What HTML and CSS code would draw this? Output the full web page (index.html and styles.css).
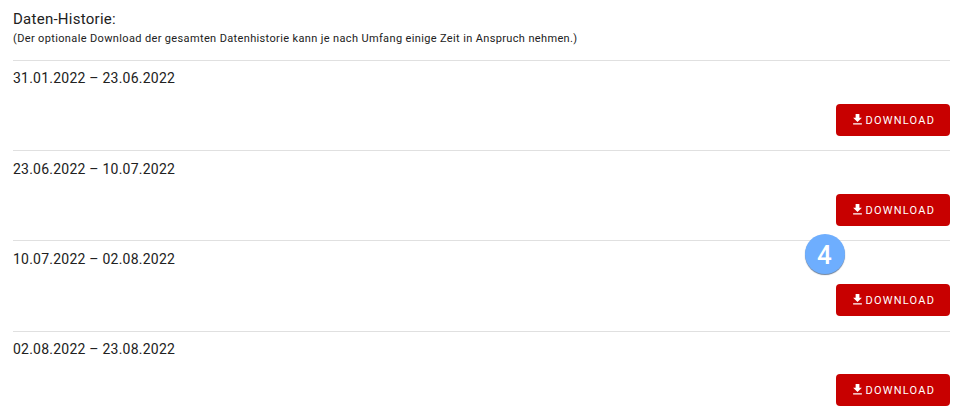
FILE: index.html
```html
<!DOCTYPE html>
<html lang="de">
<head>
<meta charset="utf-8">
<title>Daten-Historie</title>
<link rel="stylesheet" href="styles.css">
</head>
<body>
<svg class="defs" aria-hidden="true"><symbol id="dl" viewBox="0 0 24 24"><path d="M19 9h-4V3H9v6H5l7 7 7-7zM5 18v2h14v-2H5z"/></symbol></svg>
<main class="history">
  <header class="head">
    <h1 class="title">Daten-Historie:</h1>
    <p class="note">(Der optionale Download der gesamten Datenhistorie kann je nach Umfang einige Zeit in Anspruch nehmen.)</p>
  </header>
  <section class="row"><div class="range">31.01.2022 – 23.06.2022</div><button class="btn"><svg class="icon"><use href="#dl"/></svg><span class="label">DOWNLOAD</span></button></section>
  <section class="row"><div class="range">23.06.2022 – 10.07.2022</div><button class="btn"><svg class="icon"><use href="#dl"/></svg><span class="label">DOWNLOAD</span></button></section>
  <section class="row"><div class="range">10.07.2022 – 02.08.2022</div><button class="btn"><svg class="icon"><use href="#dl"/></svg><span class="label">DOWNLOAD</span></button><span class="badge">4</span></section>
  <section class="row"><div class="range">02.08.2022 – 23.08.2022</div><button class="btn"><svg class="icon"><use href="#dl"/></svg><span class="label">DOWNLOAD</span></button></section>
</main>
</body>
</html>
```
FILE: styles.css
```css
body {
  margin: 0;
  background: #fff;
  color: #212121;
  font-family: Roboto, sans-serif;
  overflow: hidden;
}
.defs { display: none; }
.history { padding: 0 13px; }
.head {
  box-sizing: border-box;
  height: 60.1px;
  padding-top: 8px;
}
.title {
  margin: 0;
  font-size: 15px;
  font-weight: 400;
  line-height: 22px;
  letter-spacing: 0.26px;
}
.note {
  margin: 1px 0 0;
  font-size: 11px;
  line-height: 16px;
  letter-spacing: 0.36px;
  white-space: nowrap;
}
.row {
  position: relative;
  display: flex;
  flex-direction: column;
  box-sizing: border-box;
  height: 90.16px;
  padding-top: 7.3px;
  border-top: 1px solid #e0e0e0;
}
.range {
  font-size: 14px;
  line-height: 20px;
  letter-spacing: 0.23px;
}
.btn {
  display: flex;
  align-items: center;
  align-self: flex-end;
  box-sizing: border-box;
  width: 114px;
  height: 32px;
  margin: 15.4px 0 0;
  padding: 0 0 0 14px;
  border: 0;
  border-radius: 4px;
  background: #c80000;
  color: #fff;
  font: 400 11px/16px Roboto, sans-serif;
  letter-spacing: 1.22px;
}
.label { padding-top: 1.8px; }
.icon {
  width: 15px;
  height: 15px;
  margin: 0 0.5px 1px 0;
  fill: currentColor;
}
.badge {
  position: absolute;
  top: -7px;
  right: 105px;
  width: 40px;
  height: 40px;
  border-radius: 50%;
  background: #6eaefe;
  box-shadow: 0 1px 1px #6b7f99;
  color: #fff;
  font-size: 26px;
  font-weight: 500;
  line-height: 42px;
  text-align: center;
  text-indent: -1px;
}
```
